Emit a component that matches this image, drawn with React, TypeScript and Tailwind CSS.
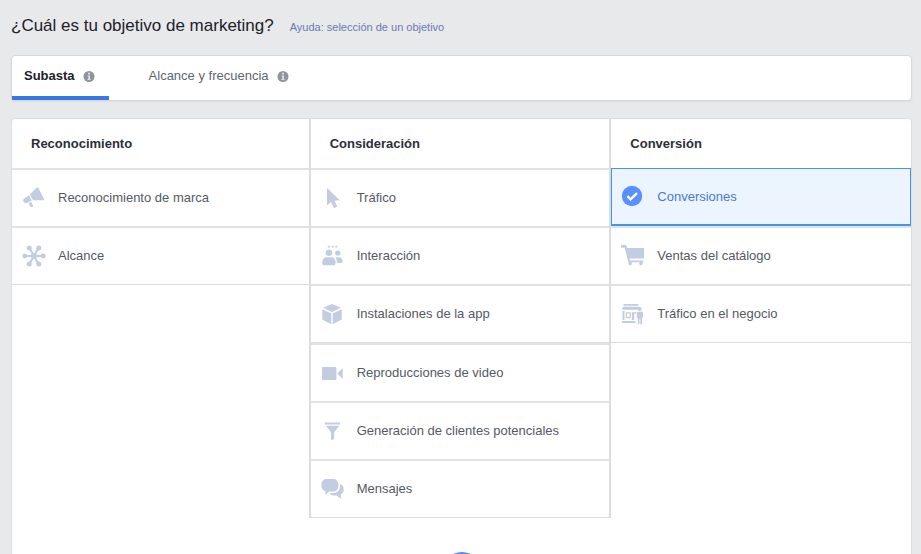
import { useState, type ReactNode } from "react";

type Objective = { id: string; label: string; icon: ReactNode };

const InfoIcon = () => (
  <svg viewBox="0 0 12 12" className="h-3 w-3 shrink-0" aria-hidden="true">
    <circle cx="6" cy="6.5" r="5.5" fill="#90949c" />
    <path d="M5 2.8h2v1.6H5zM4.6 5.4H7V9h.6v1H4.5V9h.7V6.4h-.6z" fill="#dcdee2" />
  </svg>
);

const Icon = ({ children }: { children: ReactNode }) => (
  <svg viewBox="0 0 24 24" className="h-6 w-6 shrink-0" fill="#c3cce0" aria-hidden="true">
    {children}
  </svg>
);

const CheckIcon = () => (
  <svg viewBox="0 0 24 24" className="h-6 w-6 shrink-0" aria-hidden="true">
    <circle cx="11" cy="11" r="10.2" fill="#5890ff" />
    <path d="M6.4 11.2l3.2 3.2 6.4-6.3" fill="none" stroke="#fff" strokeWidth="2.4" />
  </svg>
);

const awareness: Objective[] = [
  {
    id: "brand",
    label: "Reconocimiento de marca",
    icon: (
      <Icon>
        <path d="M14.8 1.6c.6-.5 1.3-.2 1.6.5L22 12.900c.3.7 0 1.300-.8 1.300L11 14.200 7.900 8.600z" />
        <path d="M7 9.200l2.900 5.300-4.500 2.200c-1.600.7-3.200.3-3.900-1-.7-1.300-.2-2.700 1.100-3.500zM6.400 17.200l2.800-1.200 1.700 3.200c.4.9.2 1.500-.6 1.900-.8.4-1.500.1-1.900-.7z" />
      </Icon>
    ),
  },
  {
    id: "reach",
    label: "Alcance",
    icon: (
      <Icon>
        <path d="M3 12h18M7.500 4l9 16M16.500 4l-9 16" stroke="#c3cce0" strokeWidth="2" />
        <circle cx="12" cy="12" r="3" />
        <circle cx="2.8" cy="12" r="2.4" />
        <circle cx="21.2" cy="12" r="2.4" />
        <circle cx="7.2" cy="4" r="2.5" />
        <circle cx="16.8" cy="4" r="2.5" />
        <circle cx="7.2" cy="20" r="2.5" />
        <circle cx="16.8" cy="20" r="2.5" />
      </Icon>
    ),
  },
];

const consideration: Objective[] = [
  {
    id: "traffic",
    label: "Tráfico",
    icon: (
      <Icon>
        <path d="M6 2l12.7 12.2-5.2.5 2.8 5.9-3.4 1.6-2.8-6.2L6 19.3z" />
      </Icon>
    ),
  },
  {
    id: "engagement",
    label: "Interacción",
    icon: (
      <Icon>
        <path d="M6.800 1.800h2v1.700h-2zM10.600 1.800h2v1.700h-2zM14.400 1.800h2v1.700h-2z" />
        <circle cx="8" cy="8.7" r="3.3" />
        <circle cx="16.8" cy="9.2" r="2.6" />
        <path d="M1.200 18.500c0-3.500 2-5.300 4.300-5.300h4.800c2.500 0 4.300 2 4.300 5.300 0 2-1 2.800-2.500 2.800H3.700c-1.500 0-2.500-.8-2.500-2.800zM14.300 13.200h3.600c2.400 0 3.700 1.800 3.700 4 0 1.300-.8 1.900-2 1.900H16c0-2.400-.5-4.300-1.700-5.900z" />
      </Icon>
    ),
  },
  {
    id: "installs",
    label: "Instalaciones de la app",
    icon: (
      <Icon>
        <path d="M11 2l8.800 3.800L11 9.900 2.200 5.800z" />
        <path d="M1.300 7.300l9 4.200v10.800l-9-4.700zM20.700 7.300l-9 4.200v10.800l9-4.700z" />
      </Icon>
    ),
  },
];

const considerationMore: Objective[] = [
  {
    id: "video",
    label: "Reproducciones de video",
    icon: (
      <Icon>
        <rect x="1" y="6" width="14.4" height="13" rx="1" />
        <path d="M16.300 12.500l5.400-5.500v11z" />
      </Icon>
    ),
  },
  {
    id: "leads",
    label: "Generación de clientes potenciales",
    icon: (
      <Icon>
        <path d="M4 3.500h15v2H4zM4.800 6.800h13.400l-5 6.400v6.600l-3.200 1.700v-8.300z" />
      </Icon>
    ),
  },
  {
    id: "messages",
    label: "Mensajes",
    icon: (
      <Icon>
        <path d="M5.500 2h7C15.600 2 17.500 4.500 17.500 8.300s-2 6.200-5 6.200H8.300L4.500 18v-3.800C1.800 13.600.4 11.400.4 8.300.4 4.500 2.400 2 5.500 2z" />
        <path d="M18.800 6.800c2.500.9 3.900 3 3.900 5.600 0 2.300-.9 4-2.900 5l.5 4.600-4.800-3.500h-2.700c-1.900 0-3.400-1-4.100-2.500h4.100c3.800 0 6.200-2.700 6.200-7.200 0-.7-.1-1.400-.2-2z" />
      </Icon>
    ),
  },
];

const conversion: Objective[] = [
  { id: "conversions", label: "Conversiones", icon: null },
  {
    id: "catalog",
    label: "Ventas del catálogo",
    icon: (
      <Icon>
        <path d="M0 1h5.200l1 3H23v10.500H8.500l.5 2h13.300v1.800H7.400L3.700 3.700H0z" />
        <circle cx="9.2" cy="19.6" r="1.8" />
        <circle cx="20" cy="19.6" r="1.8" />
      </Icon>
    ),
  },
  {
    id: "store",
    label: "Tráfico en el negocio",
    icon: (
      <Icon>
        <path d="M2.500 2h14.800v1.800H2.500zM2 4.800h15.800v3H1zM1.500 9h2v9h-2zM4.800 10.200h5v6h-5zM10.800 10.200h4.400v1.600h-2v6.200h-2.400zM1 19h13.500v2H1z" />
        <path d="M6 11.500h2.600v3.300H6z" fill="#fff" />
        <circle cx="18.7" cy="6.9" r="2" />
        <path d="M15.800 9.800h6.200v6h-1v6.400h-1.700v-5h-.8v5h-1.700v-6.400h-1z" />
      </Icon>
    ),
  },
];

type ListProps = {
  items: Objective[];
  selected: string;
  onSelect: (id: string) => void;
};

function ObjectiveList({ items, selected, onSelect }: ListProps) {
  return (
    <ul className="border-b border-[#dcdddf]">
      {items.map((item) => {
        const active = item.id === selected;
        return (
          <li key={item.id}>
            <button
              type="button"
              aria-pressed={active}
              onClick={() => onSelect(item.id)}
              className={`flex h-[58px] w-full items-center gap-3 text-left ${
                active
                  ? "border border-b-2 border-[#4596e6] bg-[#ecf5fd] pl-[9px] text-[#4a78e0]"
                  : "border-t-2 border-[#e1e2e4] pl-2.5 text-[#555a63]"
              }`}
            >
              {active ? <CheckIcon /> : item.icon}
              <span>{item.label}</span>
            </button>
          </li>
        );
      })}
    </ul>
  );
}

function Column({ title, children }: { title: string; children: ReactNode }) {
  return (
    <section>
      <h2 className="flex h-[49px] items-center pl-[19px] font-bold text-[#2b2f37]">{title}</h2>
      {children}
    </section>
  );
}

export default function App() {
  const [selected, setSelected] = useState("conversions");
  const [tab, setTab] = useState("auction");
  const listProps = { selected, onSelect: setSelected };

  return (
    <main className="flex h-screen flex-col overflow-hidden bg-[#e8e9eb] pr-[9px] pl-[11px] font-['Liberation_Sans',Arial,sans-serif] text-[13px] text-[#606770]">
      <header className="flex items-baseline gap-4 pt-[13px] pb-4">
        <h1 className="text-[17px] leading-[26px] text-[#1d2129]">¿Cuál es tu objetivo de marketing?</h1>
        <a href="#ayuda" className="text-[11px] text-[#6b7ab0]">
          Ayuda: selección de un objetivo
        </a>
      </header>

      <nav className="flex h-[46px] shrink-0 rounded border border-[#d5d7da] bg-white shadow-xs">
        <button
          type="button"
          onClick={() => setTab("auction")}
          className={`flex items-center gap-2 border-b-4 pr-3.5 pl-3 ${
            tab === "auction" ? "border-[#3578e5] font-bold text-[#1d2129]" : "border-transparent"
          }`}
        >
          Subasta <InfoIcon />
        </button>
        <button
          type="button"
          onClick={() => setTab("reach")}
          className={`ml-7 flex items-center gap-2 border-b-4 px-3 ${
            tab === "reach" ? "border-[#3578e5] font-bold text-[#1d2129]" : "border-transparent"
          }`}
        >
          Alcance y frecuencia <InfoIcon />
        </button>
      </nav>

      <div className="mt-[17px] shrink-0 rounded border border-[#dcdddf] bg-white pb-8">
        <div className="grid grid-cols-3">
          <Column title="Reconocimiento">
            <ObjectiveList items={awareness} {...listProps} />
          </Column>
          <div className="-ml-[3px] border-x-2 border-[#dcdddf]">
            <Column title="Consideración">
              <ObjectiveList items={consideration} {...listProps} />
              <ObjectiveList items={considerationMore} {...listProps} />
            </Column>
          </div>
          <Column title="Conversión">
            <ObjectiveList items={conversion} {...listProps} />
          </Column>
        </div>
        <div className="mx-auto mt-[34px] h-10 w-10 rounded-full bg-[#4f8bf7]" />
      </div>
    </main>
  );
}
